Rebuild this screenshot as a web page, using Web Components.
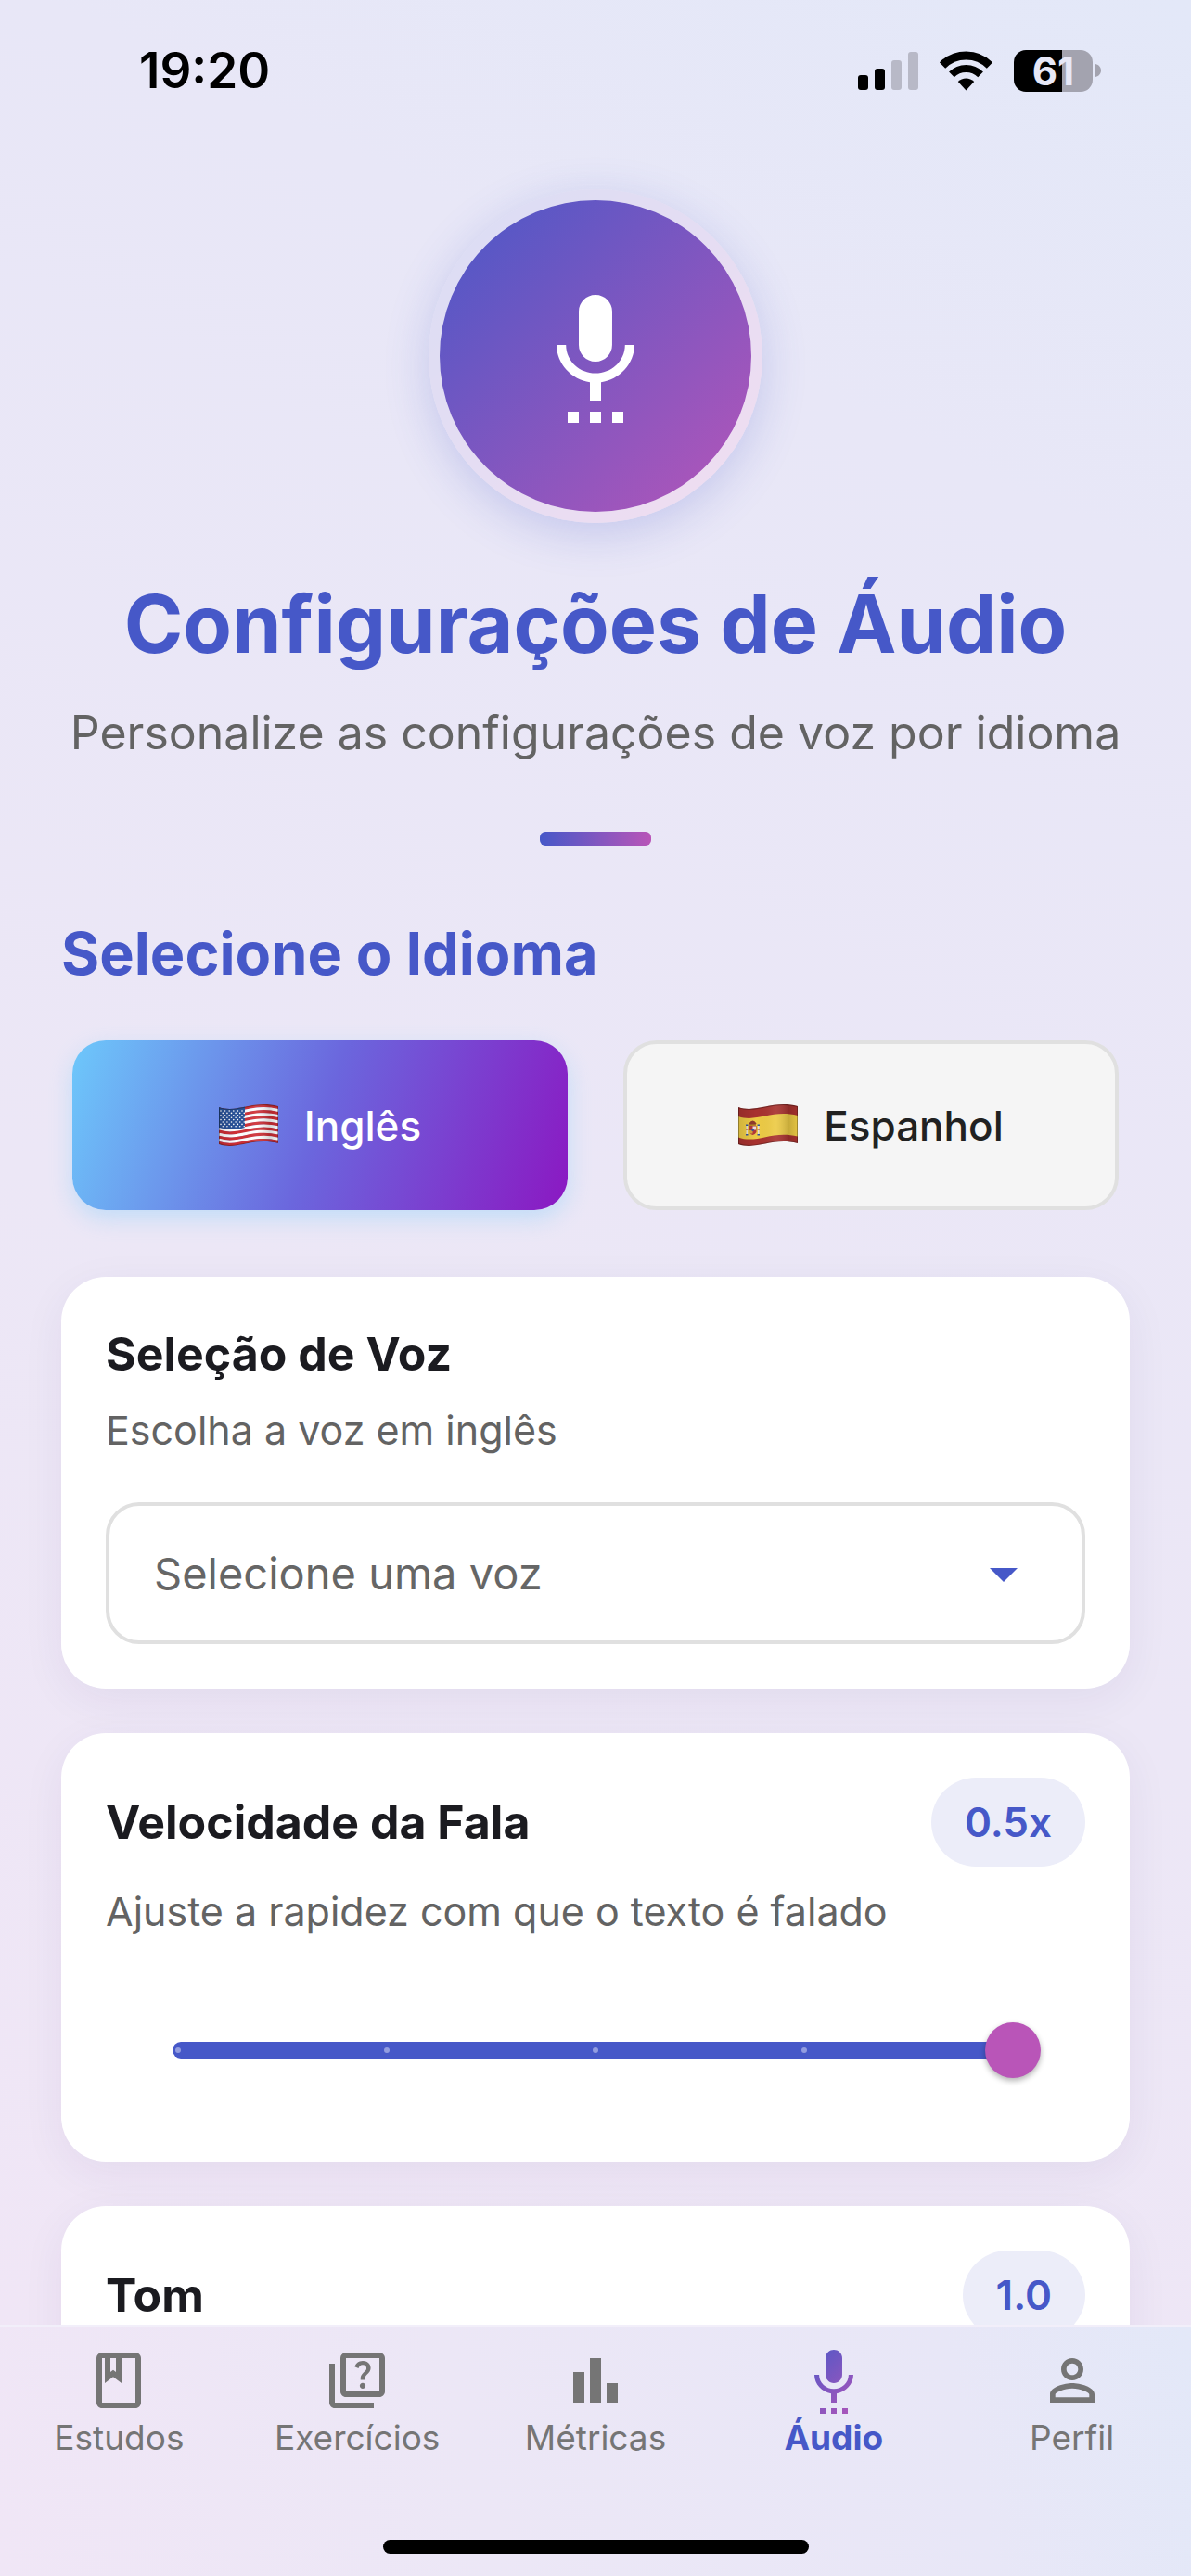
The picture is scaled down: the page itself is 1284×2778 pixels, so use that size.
<!DOCTYPE html>
<html lang="pt-BR">
<head>
<meta charset="utf-8">
<meta name="viewport" content="width=device-width, initial-scale=1">
<title>Configurações de Áudio</title>
<style>
  :root {
    --primary: #4658c8;
    --secondary: #b955b8;
    --ink: #1b1b20;
    --muted: #636363;
    --line: #e0e0e0;
    --badge: #ecedf9;
    --wash: #e3e8f8, #e8e7f7 20%, #ece7f6 60%, #f0e6f6;
  }
  html, body { height: 100%; }
  body { margin: 0; font-family: Inter, "Liberation Sans", sans-serif; color: var(--ink); }
</style>
</head>
<body>
<app-screen>
  <status-bar slot="status" time="19:20" battery="61"></status-bar>
  <page-hero heading="Configurações de Áudio" subheading="Personalize as configurações de voz por idioma"></page-hero>
  <language-picker heading="Selecione o Idioma"></language-picker>
  <voice-card heading="Seleção de Voz" hint="Escolha a voz em inglês" placeholder="Selecione uma voz"></voice-card>
  <slider-card heading="Velocidade da Fala" hint="Ajuste a rapidez com que o texto é falado" value="0.5x" position="4"></slider-card>
  <slider-card heading="Tom" value="1.0" position="2"></slider-card>
  <tab-bar slot="tabs"></tab-bar>
</app-screen>

<script>
const MIC = 'M7 24h2v-2H7v2zm5-11c1.66 0 2.99-1.34 2.99-3L15 4c0-1.66-1.34-3-3-3S9 2.34 9 4v6c0 1.66 1.34 3 3 3zm-1 11h2v-2h-2v2zm4 0h2v-2h-2v2zm4-14h-1.7c0 3-2.54 5.1-5.3 5.1S6.7 13 6.7 10H5c0 3.41 2.72 6.23 6 6.72V20h2v-3.28c3.28-.49 6-3.31 6-6.72z';

class BaseElement extends HTMLElement {
  connectedCallback() {
    if (this.shadowRoot) return;
    this.attachShadow({ mode: 'open' }).innerHTML =
      '<style>*{box-sizing:border-box;margin:0}:host{display:block;box-sizing:border-box}</style>' + this.render();
  }
  attr(name) { return this.getAttribute(name) || ''; }
}

customElements.define('app-screen', class extends BaseElement {
  render() {
    return `<style>
      :host { display: flex; flex-direction: column; height: 100vh; }
      .view { flex: 1; min-height: 0; display: flex; flex-direction: column; background: linear-gradient(207deg, var(--wash)); }
      main { flex: 1; min-height: 0; overflow-y: auto; scrollbar-width: none; padding: 52px 66px 0; display: flex; flex-direction: column; }
      main ::slotted(*) { flex: none; }
    </style>
    <div class="view"><slot name="status"></slot><main><slot></slot></main></div>
    <slot name="tabs"></slot>`;
  }
});

customElements.define('status-bar', class extends BaseElement {
  render() {
    const level = this.attr('battery');
    return `<style>
      :host { display: flex; align-items: center; justify-content: space-between; height: 152px; padding: 0 97px 0 150px; color: #000; }
      .time { font-size: 53px; font-weight: 600; line-height: 60px; }
      .icons { display: flex; align-items: center; gap: 23px; }
      .battery { display: flex; align-items: center; gap: 3px; }
      .cell { width: 85px; height: 45px; border-radius: 13px; display: flex; align-items: center; justify-content: center;
        background: linear-gradient(90deg, #000 ${level}%, #a3a3af ${level}%); color: #e7e8f7; font-size: 42px; font-weight: 700; line-height: 45px; }
      svg { display: block; }
    </style>
    <span class="time">${this.attr('time')}</span>
    <div class="icons">
      <svg width="65" height="42" viewBox="0 0 65 42"><rect y="26" width="11" height="16" rx="3"/><rect x="18" y="19" width="11" height="23" rx="3"/><g fill="#b8b9c7"><rect x="36" y="10" width="11" height="32" rx="3"/><rect x="54" y="1" width="11" height="41" rx="3"/></g></svg>
      <svg width="57" height="43" viewBox="0 0 57 43"><g fill="none" stroke="#000" stroke-width="9"><path d="M3 15.5A36 36 0 0 1 54 15.5"/><path stroke-width="8" d="M12.9 25.4A22 22 0 0 1 44.1 25.4"/></g><path d="M28.5 42.5L19.8 33A12.3 12.3 0 0 1 37.2 33Z"/></svg>
      <div class="battery"><div class="cell">${level}</div><svg width="6" height="16" viewBox="0 0 6 16"><path fill="#a3a3af" d="M0 1C8 3 8 13 0 15Z"/></svg></div>
    </div>`;
  }
});

customElements.define('page-hero', class extends BaseElement {
  render() {
    return `<style>
      :host { display: flex; flex-direction: column; align-items: center; text-align: center; }
      .disc { width: 360px; height: 360px; border-radius: 50%; border: 12px solid rgba(255,255,255,.8); display: grid; place-items: center;
        background: linear-gradient(135deg, var(--primary), var(--secondary)) border-box; box-shadow: 0 12px 48px rgba(70,88,200,.22); }
      h1 { margin-top: 59px; font-size: 86px; line-height: 100px; font-weight: 700; color: var(--primary); white-space: nowrap; }
      p { margin-top: 37px; font-size: 50px; line-height: 60px; color: var(--muted); white-space: nowrap; }
      .rule { margin-top: 77px; width: 120px; height: 15px; border-radius: 6px; background: linear-gradient(90deg, var(--primary), var(--secondary)); }
    </style>
    <div class="disc"><svg width="144" height="144" viewBox="0 0 24 24"><path fill="#fff" d="${MIC}"/></svg></div>
    <h1>${this.attr('heading')}</h1>
    <p>${this.attr('subheading')}</p>
    <div class="rule"></div>`;
  }
});

const WAVE = 'C20 10 36 -5 64 2';
const flag = (id, body) => `<svg width="64" height="45" viewBox="0 0 64 45" aria-hidden="true"><defs>
    <clipPath id="${id}"><path d="M0 3${WAVE}V42C36 35 20 50 0 43Z"/></clipPath>
    <linearGradient id="${id}s"><stop offset="0" stop-opacity=".12"/><stop offset=".3" stop-opacity="0"/><stop offset=".62" stop-color="#fff" stop-opacity=".08"/><stop offset=".85" stop-opacity=".16"/><stop offset="1" stop-opacity=".04"/></linearGradient></defs>
    <g clip-path="url(#${id})">${body}<path fill="url(#${id}s)" d="M0 0h64v45H0z"/><path fill="none" stroke="#000" stroke-opacity=".3" stroke-width="2" d="M0 3${WAVE}V42C36 35 20 50 0 43Z"/></g></svg>`;
const usFlag = () => {
  let out = '';
  for (let i = 0; i < 13; i++)
    out += `<g transform="translate(0 ${(i * 3.08 + 1.5).toFixed(2)})"><path fill="none" stroke="${i % 2 ? '#fff' : '#cf2f36'}" stroke-width="3.3" d="M0 3${WAVE}"/></g>`;
  out += '<path fill="#2a5298" d="M0 0H28V25C18 28 8 27 0 25Z"/>';
  for (let r = 0; r < 8; r++)
    for (let c = 0; c < 6; c++)
      out += `<circle cx="${2 + c * 4.6 + (r % 2) * 2.3}" cy="${(7 + r * 2.4).toFixed(1)}" r=".8" fill="#fff"/>`;
  return flag('us', out);
};
const esFlag = () => flag('es', `<path fill="#a8322f" d="M0 0h64v45H0z"/>
    <g transform="translate(0 10)"><path fill="#edcb45" d="M0 3${WAVE}V24.500C36 17.500 20 33 0 25.500Z"/></g>
    <path fill="#8f3a2c" d="M11.500 20.500q4-6 8 0l-1 1.500h-6z"/><path fill="#b98824" d="M12 21.500h7V23h-7z"/>
    <path fill="#b5393a" d="M11.500 23h8v7q-4 6-8 0z"/><path fill="#e8dede" d="M15.500 23.500h3.500v4h-3.500z"/><path fill="#d9a93a" d="M12 28h3.500v3.500H12z"/><circle cx="15.500" cy="27.500" r="1.400" fill="#36559c"/>
    <path fill="#e6e0d8" d="M8.500 23h1.500v9H8.500zM21 23h1.500v9H21z"/><path fill="#36559c" d="M8 21.500h2.500V23H8zM20.500 21.500H23V23h-2.500zM8 32h2.500v1.500H8zM20.500 32H23v1.500h-2.500z"/><path fill="#b5393a" d="M8 26h2.500v1.500H8zM20.500 26H23v1.500h-2.500z"/>`);

customElements.define('language-picker', class extends BaseElement {
  render() {
    return `<style>
      :host { margin-top: 80px; }
      h2 { font-size: 63px; line-height: 72px; font-weight: 700; color: var(--primary); }
      .options { display: grid; grid-template-columns: 1fr 1fr; gap: 60px; margin: 58px 12px 0; }
      button { display: flex; align-items: center; justify-content: center; gap: 28px; height: 183px; border: 4px solid var(--line); border-radius: 36px;
        background: #f5f5f5; color: #212121; font: 500 44px/52px Inter, "Liberation Sans", sans-serif; }
      button[aria-pressed="true"] { border: 0; color: #fff; background: linear-gradient(109deg, #6dc8fb, #6b66dd 50%, #8b18c2); box-shadow: 0 9px 24px rgba(107,198,251,.32); }
    </style>
    <h2>${this.attr('heading')}</h2>
    <div class="options">
      <button type="button" aria-pressed="true">${usFlag()}<span>Inglês</span></button>
      <button type="button" aria-pressed="false">${esFlag()}<span>Espanhol</span></button>
    </div>`;
  }
});

const CARD = `<style>
  :host { margin-top: 48px; padding: 48px; border-radius: 48px; background: #fff; box-shadow: 0 12px 48px rgba(50,40,110,.06); }
  .head { display: flex; align-items: center; justify-content: space-between; min-height: 69px; }
  label { font-size: 50px; line-height: 60px; font-weight: 700; }
  p { margin-top: 18px; font-size: 43px; line-height: 60px; color: var(--muted); }
</style>`;

customElements.define('voice-card', class extends BaseElement {
  render() {
    return CARD + `<style>
      :host { margin-top: 72px; }
      .field { display: grid; align-items: center; margin-top: 48px; }
      .field > * { grid-area: 1 / 1; }
      select { appearance: none; width: 100%; height: 153px; padding: 0 140px 0 48px; border: 4px solid var(--line); border-radius: 36px; background: #fff;
        color: #666; font: 400 47px/60px Inter, "Liberation Sans", sans-serif; }
      svg { justify-self: end; margin-right: 52px; pointer-events: none; }
    </style>
    <div class="head"><label for="voice">${this.attr('heading')}</label></div>
    <p>${this.attr('hint')}</p>
    <div class="field">
      <select id="voice"><option>${this.attr('placeholder')}</option></select>
      <svg width="72" height="72" viewBox="0 0 24 24"><path fill="#4658c8" d="M7 10l5 5 5-5z"/></svg>
    </div>`;
  }
});

customElements.define('slider-card', class extends BaseElement {
  render() {
    const hint = this.attr('hint');
    return CARD + `<style>
      output { padding: 0 36px; border-radius: 48px; background: var(--badge); color: var(--primary); font-size: 44px; line-height: 96px; font-weight: 600; }
      .slider { display: grid; align-items: center; height: 144px; margin: 48px 48px 0; }
      .slider > * { grid-area: 1 / 1; }
      .bar { display: flex; align-items: center; justify-content: space-between; height: 18px; margin: 0 24px; padding: 0 3px; border-radius: 9px; background: var(--primary); }
      i { width: 6px; height: 6px; border-radius: 50%; background: #929ce0; }
      input { appearance: none; width: 100%; height: 60px; margin: 0; background: none; }
      input::-webkit-slider-thumb { appearance: none; width: 60px; height: 60px; border-radius: 50%; background: var(--secondary); box-shadow: 0 3px 6px rgba(0,0,0,.3); }
    </style>
    <div class="head"><label for="range">${this.attr('heading')}</label><output for="range">${this.attr('value')}</output></div>
    ${hint ? `<p>${hint}</p>` : ''}
    <div class="slider"><div class="bar"><i></i><i></i><i></i><i></i><i></i></div>
      <input id="range" type="range" min="0" max="4" step="1" value="${this.attr('position')}"></div>`;
  }
});

const TABS = [
  ['Estudos', 'M18 2H6c-1.1 0-2 .9-2 2v16c0 1.1.9 2 2 2h12c1.1 0 2-.9 2-2V4c0-1.1-.9-2-2-2zM9 4h2v5l-1-.75L9 9V4zm9 16H6V4h1v9l3-2.25L13 13V4h5v16z'],
  ['Exercícios', 'M4 6H2v14c0 1.1.9 2 2 2h14v-2H4V6zm16-4H8c-1.1 0-2 .9-2 2v12c0 1.1.9 2 2 2h12c1.1 0 2-.9 2-2V4c0-1.1-.9-2-2-2zm0 14H8V4h12v12zM13.51 10.16c.41-.73 1.18-1.16 1.63-1.8.48-.68.21-1.94-1.14-1.94-.88 0-1.32.67-1.5 1.23l-1.37-.57C11.51 5.96 12.52 5 13.99 5c1.23 0 2.08.56 2.51 1.26.37.6.58 1.73.01 2.57-.63.93-1.23 1.21-1.56 1.81-.13.24-.18.4-.18 1.18h-1.52c.01-.41-.06-1.08.26-1.66zM12.95 13.95c0-.59.47-1.04 1.05-1.04.59 0 1.04.45 1.04 1.04 0 .58-.44 1.05-1.04 1.05-.58 0-1.05-.47-1.05-1.05z'],
  ['Métricas', 'M4 9h4v11H4zm12 4h4v7h-4zm-6-9h4v16h-4z'],
  ['Áudio', MIC, true],
  ['Perfil', 'M12 5.9c1.16 0 2.1.94 2.1 2.1s-.94 2.1-2.1 2.1S9.9 9.16 9.9 8s.94-2.1 2.1-2.1m0 9c2.97 0 6.1 1.46 6.1 2.1v1.1H5.9V17c0-.64 3.13-2.1 6.1-2.1M12 4C9.79 4 8 5.79 8 8s1.79 4 4 4 4-1.79 4-4-1.79-4-4-4zm0 9c-2.67 0-8 1.34-8 4v3h16v-3c0-2.66-5.33-4-8-4z']
];

customElements.define('tab-bar', class extends BaseElement {
  render() {
    return `<style>
      :host { flex: none; display: flex; flex-direction: column; justify-content: space-between; align-items: center; min-height: 271px; padding: 21px 0 24px;
        border-top: 3px solid #f2effa; background: linear-gradient(258deg, var(--wash)); }
      nav { display: grid; grid-template-columns: repeat(5, 1fr); width: 100%; }
      a { display: flex; flex-direction: column; align-items: center; gap: 4px; color: #757575; fill: #757575; font-size: 37px; line-height: 44px; text-decoration: none; }
      a[aria-current] { color: var(--primary); fill: url(#tint); font-weight: 700; }
      .home { width: 459px; height: 15px; border-radius: 8px; background: #000; }
    </style>
    <nav>${TABS.map(([name, d, on]) => `<a href="#"${on ? ' aria-current="page"' : ''}><svg width="72" height="72" viewBox="0 0 24 24">${on ? '<defs><linearGradient id="tint" gradientUnits="userSpaceOnUse" x1="0" y1="0" x2="24" y2="24"><stop stop-color="#4658c8"/><stop offset="1" stop-color="#b955b8"/></linearGradient></defs>' : ''}<path d="${d}"/></svg><span>${name}</span></a>`).join('')}</nav>
    <div class="home"></div>`;
  }
});
</script>
</body>
</html>
